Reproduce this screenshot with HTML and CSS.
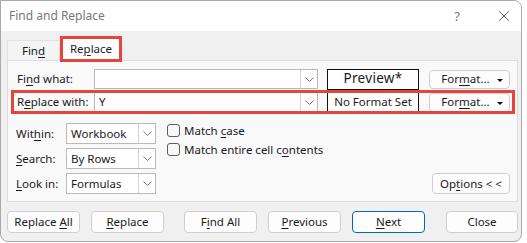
FILE: index.html
```html
<!DOCTYPE html>
<html lang="en">
<head>
  <meta charset="utf-8">
  <title>Find and Replace</title>
  <link rel="stylesheet" href="styles.css">
</head>
<body>
  <div class="window">
    <header class="titlebar">
      <span class="title">Find and Replace</span>
      <span class="help">?</span>
      <svg class="close" width="12" height="12" viewBox="0 0 12 12"><path d="M1 1L11 11M11 1L1 11" stroke="#6a6a6a" stroke-width="1"/></svg>
    </header>

    <nav class="tabs">
      <span class="tab">Fin<u>d</u></span>
      <span class="tab active">Re<u>p</u>lace</span>
    </nav>

    <section class="panel">
      <div class="field-row">
        <span class="label">Fi<u>n</u>d what:</span>
        <div class="combo wide">
          <span class="value"></span>
          <span class="arrow"><svg width="9" height="5" viewBox="0 0 9 5"><path d="M0.5 0.5L4.5 4.5L8.5 0.5" fill="none" stroke="#777"/></svg></span>
        </div>
        <div class="preview large">Preview*</div>
        <button class="format">For<u>m</u>at...<span class="caret"></span></button>
      </div>

      <div class="field-row marked">
        <span class="label">R<u>e</u>place with:</span>
        <div class="combo wide">
          <span class="value">Y</span>
          <span class="arrow"><svg width="9" height="5" viewBox="0 0 9 5"><path d="M0.5 0.5L4.5 4.5L8.5 0.5" fill="none" stroke="#777"/></svg></span>
        </div>
        <div class="preview">No Format Set</div>
        <button class="format">For<u>m</u>at...<span class="caret"></span></button>
      </div>

      <div class="options">
        <div class="selects">
          <div class="select-row">
            <span class="label short">Wit<u>h</u>in:</span>
            <div class="combo narrow">
              <span class="value">Workbook</span>
              <span class="arrow"><svg width="9" height="5" viewBox="0 0 9 5"><path d="M0.5 0.5L4.5 4.5L8.5 0.5" fill="none" stroke="#777"/></svg></span>
            </div>
          </div>
          <div class="select-row">
            <span class="label short"><u>S</u>earch:</span>
            <div class="combo narrow">
              <span class="value">By Rows</span>
              <span class="arrow"><svg width="9" height="5" viewBox="0 0 9 5"><path d="M0.5 0.5L4.5 4.5L8.5 0.5" fill="none" stroke="#777"/></svg></span>
            </div>
          </div>
          <div class="select-row">
            <span class="label short"><u>L</u>ook in:</span>
            <div class="combo narrow">
              <span class="value">Formulas</span>
              <span class="arrow"><svg width="9" height="5" viewBox="0 0 9 5"><path d="M0.5 0.5L4.5 4.5L8.5 0.5" fill="none" stroke="#777"/></svg></span>
            </div>
          </div>
        </div>

        <div class="checks">
          <label class="check"><span class="box"></span><span>Match <u>c</u>ase</span></label>
          <label class="check"><span class="box"></span><span>Match entire cell c<u>o</u>ntents</span></label>
        </div>

        <button class="btn options-btn">Op<u>t</u>ions &lt; &lt;</button>
      </div>
    </section>

    <footer class="actions">
      <button class="btn">Replace <u>A</u>ll</button>
      <button class="btn"><u>R</u>eplace</button>
      <button class="btn find-all">F<u>i</u>nd All</button>
      <button class="btn"><u>P</u>revious</button>
      <button class="btn default"><u>N</u>ext</button>
      <button class="btn close-btn">Close</button>
    </footer>
  </div>
</body>
</html>
```

FILE: styles.css
```css
* {
  margin: 0;
  padding: 0;
  box-sizing: border-box;
}

:root {
  --ink: #1a1a1a;
  --dialog: #f0f0f0;
  --panel: #f9f9f9;
  --field-border: #b9b9b9;
  --button-border: #cfcfcf;
  --mark: #e5443f;
  --accent: #0067c0;
}

body {
  background: #fff;
  color: var(--ink);
  font-family: "Noto Sans", "Open Sans", sans-serif;
  font-size: 11.5px;
  line-height: 1;
}

u {
  text-underline-offset: 2px;
  text-decoration-thickness: 1px;
}

.window {
  width: 522px;
  height: 242px;
  border: 1px solid #a9a9a9;
  border-radius: 0 8px 8px 8px;
  background: var(--dialog);
  overflow: hidden;
}

.titlebar {
  display: flex;
  align-items: center;
  height: 30px;
  padding: 0 0 0 8px;
  background: #fff;
}

.title {
  color: #777;
  font-size: 12px;
}

.help {
  margin-left: auto;
  color: #777;
  font-size: 13px;
}

.close {
  margin: 0 11px 0 38px;
}

.tabs {
  display: flex;
  align-items: flex-end;
  height: 29px;
  padding-left: 6px;
}

.tab {
  display: flex;
  align-items: center;
  justify-content: center;
  width: 53px;
  height: 20px;
  background: #f4f4f4;
  border: 1px solid #e1e1e1;
  border-bottom: none;
  padding-top: 1px;
}

.tab.active {
  position: relative;
  z-index: 1;
  width: 62px;
  height: 26px;
  margin-bottom: -2px;
  background: #fff;
  border: 3px solid var(--mark);
  padding-bottom: 1px;
}

.panel {
  height: 142px;
  margin: 0 3px 0 6px;
  padding: 8px 7px 0 9px;
  background: var(--panel);
  border: 1px solid #dcdcdc;
}

.field-row {
  position: relative;
  display: flex;
  align-items: center;
  height: 20px;
}

.field-row + .field-row {
  margin-top: 3px;
}

.field-row.marked::after {
  content: "";
  position: absolute;
  top: -2px;
  bottom: -2px;
  left: -6px;
  right: -5px;
  border: 3px solid var(--mark);
}

.label {
  width: 77px;
  flex-shrink: 0;
}

.label.short {
  width: 50px;
}

.combo {
  display: flex;
  height: 20px;
  background: #fff;
  border: 1px solid var(--field-border);
}

.combo.wide {
  width: 224px;
}

.combo.narrow {
  width: 90px;
  height: 21px;
}

.combo .value {
  flex: 1;
  display: flex;
  align-items: center;
  padding-left: 4px;
}

.combo .arrow {
  display: flex;
  align-items: center;
  justify-content: center;
  width: 17px;
  border-left: 1px solid #d4d4d4;
}

.preview {
  display: flex;
  align-items: center;
  justify-content: center;
  width: 92px;
  height: 21px;
  margin-left: 9px;
  background: #fff;
  border: 1px solid #111;
}

.preview.large {
  font-size: 13.5px;
  letter-spacing: 0.3px;
}

.btn,
.format {
  font: inherit;
  color: var(--ink);
  background: #fdfdfd;
  border: 1px solid var(--button-border);
  border-radius: 4px;
}

.format {
  position: relative;
  width: 81px;
  height: 19px;
  margin-left: 10px;
  padding-right: 8px;
}

.caret {
  position: absolute;
  right: 6px;
  top: 8px;
  border-left: 3px solid transparent;
  border-right: 3px solid transparent;
  border-top: 3px solid #111;
}

.options {
  display: flex;
  margin-top: 11px;
}

.selects {
  display: flex;
  flex-direction: column;
  gap: 4px;
}

.select-row {
  display: flex;
  align-items: center;
  margin-left: -1px;
}

.checks {
  display: flex;
  flex-direction: column;
  gap: 6px;
  margin: 1px 0 0 11px;
}

.check {
  display: flex;
  align-items: center;
  gap: 4px;
}

.box {
  width: 13px;
  height: 13px;
  border: 1px solid #5e5e5e;
  border-radius: 3px;
  background: #f7f7f7;
}

.options-btn {
  align-self: flex-end;
  width: 78px;
  height: 21px;
  margin-left: auto;
}

.actions {
  display: flex;
  padding: 9px 0 0 6px;
}

.actions .btn {
  width: 73px;
  height: 22px;
}

.actions .btn + .btn {
  margin-left: 11px;
}

.actions .find-all {
  margin-left: 20px !important;
}

.actions .close-btn {
  margin-left: 21px !important;
  width: 72px;
}

.btn.default {
  border-color: var(--accent);
}
```
